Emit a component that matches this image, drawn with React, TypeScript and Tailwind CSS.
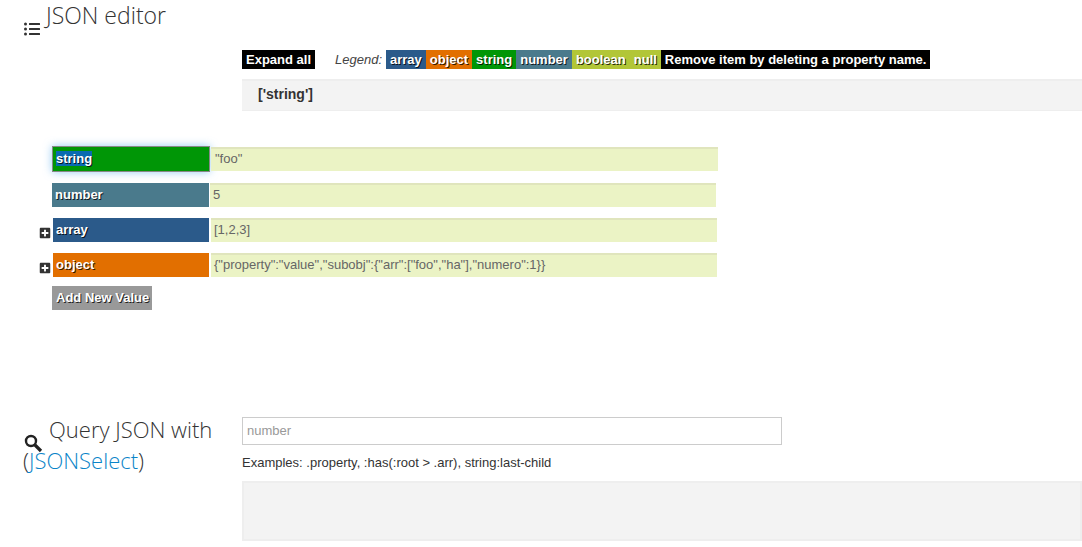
import { FaListUl, FaPlusSquare } from "react-icons/fa";

const shadow = "[text-shadow:1px_1px_0_rgba(0,0,0,0.8)]";

function Legend({ label, className }: { label: string; className: string }) {
  return <span className={`block h-[19px] px-[4px] leading-[19px] text-white font-bold ${shadow} ${className}`}>{label}</span>;
}

function Row({
  keyName,
  value,
  keyClass,
  valueClass,
  plus,
  selected,
  rowClass,
}: {
  keyName: string;
  value: string;
  keyClass: string;
  valueClass: string;
  plus?: boolean;
  selected?: boolean;
  rowClass: string;
}) {
  return (
    <div className={`flex items-center ${rowClass}`}>
      {plus && <FaPlusSquare className="absolute left-[39px] top-[9px] text-[12px] text-[#333]" />}
      <div className={`flex h-full items-center font-bold text-white ${shadow} ${keyClass}`}>
        {selected ? <span className="mb-[2px] bg-[#0a6ab0] leading-[15px]">{keyName}</span> : keyName}
      </div>
      <div className={`h-[24px] border-t-2 border-[#e0e5bd] bg-[#ebf3c5] text-[#666] leading-[20px] ${valueClass}`}>{value}</div>
    </div>
  );
}

export default function App() {
  return (
    <div className="h-[547px] w-[1082px] overflow-hidden bg-white text-[13px] text-[#333] [font-family:'Liberation_Sans',Arial,sans-serif]">
      <section className="flex h-[405px]">
        <div className="relative w-[242px] shrink-0">
          <FaListUl className="absolute left-[24px] top-[21px] text-[16px] text-[#333]" />
          <h2 className="absolute left-[46px] top-0 text-[23px] font-light leading-[31px] text-[#333] [font-family:'Open_Sans',sans-serif]">
            JSON editor
          </h2>
        </div>
        <div className="min-w-0 flex-1 pt-[50px]">
          <div className="flex h-[19px] items-center">
            <span className={`block h-[19px] w-[73px] bg-black pl-[4px] leading-[19px] font-bold text-white ${shadow}`}>Expand all</span>
            <em className="ml-[20px] mr-[4px] text-[#444]">Legend:</em>
            <Legend label="array" className="bg-[#2b5a8a]" />
            <Legend label="object" className="bg-[#e26f00]" />
            <Legend label="string" className="bg-[#009606]" />
            <Legend label="number" className="bg-[#4a7a8c]" />
            <Legend label="boolean" className="bg-[#b2c637]" />
            <Legend label="null" className="bg-[#b2c637]" />
            <span className="block h-[19px] bg-black px-[4px] leading-[19px] font-bold text-white">Remove item by deleting a property name.</span>
          </div>
          <div className="mt-[10px] h-[32px] border-y border-t-2 border-[#eeeeee] bg-[#f3f3f3] pl-[16px] text-[14px] font-bold leading-[27px] text-[#333]">
            ['string']
          </div>
        </div>
      </section>

      <section className="flex h-[142px]">
        <div className="relative w-[242px] shrink-0">
          <svg className="absolute left-[24px] top-[29px] h-[19px] w-[19px]" viewBox="0 0 19 19" fill="none" stroke="#222">
            <circle cx="7" cy="7" r="5" strokeWidth="2.4" />
            <path d="M11 11l6 6" strokeWidth="3.2" />
          </svg>
          <h2 className="absolute left-[23px] top-[9px] w-[210px] text-[22px] font-light leading-[31px] text-[#333] [font-family:'Open_Sans',sans-serif]">
            <span className="pl-[26px]">Query JSON with</span>
            <br />(<span className="text-[#0a84c8]">JSONSelect</span>)
          </h2>
        </div>
        <div className="min-w-0 flex-1 pt-[12px]">
          <div className="h-[28px] w-[540px] border border-[#cccccc] pl-[4px] leading-[26px] text-[#999]">number</div>
          <p className="mt-[10px] leading-[15px] text-[#333]">Examples: .property, :has(:root &gt; .arr), string:last-child</p>
          <div className="mt-[11px] h-[60px] border-2 border-[#eeeeee] bg-[#f3f3f3]" />
        </div>
      </section>

      <div className="absolute left-0 top-[146px] w-[740px]">
        <Row rowClass="relative h-[26px] pl-[52px]" keyName="string" selected value={'"foo"'} keyClass="w-[158px] border border-[#888] bg-[#009606] pl-[3px] shadow-[0_0_8px_rgba(82,168,236,0.6)]" valueClass="ml-[1px] w-[507px] pl-[4px]" />
        <Row rowClass="relative mt-[11px] h-[24px] pl-[52px]" keyName="number" value="5" keyClass="w-[157px] bg-[#4a7a8c] pl-[3px]" valueClass="ml-[1px] w-[506px] pl-[3px]" />
        <Row rowClass="relative mt-[11px] h-[24px] pl-[53px]" plus keyName="array" value="[1,2,3]" keyClass="w-[156px] bg-[#2b5a8a] pl-[3px]" valueClass="ml-[2px] w-[506px] pl-[3px]" />
        <Row rowClass="relative mt-[11px] h-[24px] pl-[53px]" plus keyName="object" value={'{"property":"value","subobj":{"arr":["foo","ha"],"numero":1}}'} keyClass="w-[156px] bg-[#e26f00] pl-[3px]" valueClass="ml-[2px] w-[506px] pl-[3px]" />
        <div className={`ml-[52px] mt-[9px] h-[24px] w-[100px] bg-[#999] pl-[4px] font-bold leading-[23px] text-white ${shadow}`}>Add New Value</div>
      </div>
    </div>
  );
}
